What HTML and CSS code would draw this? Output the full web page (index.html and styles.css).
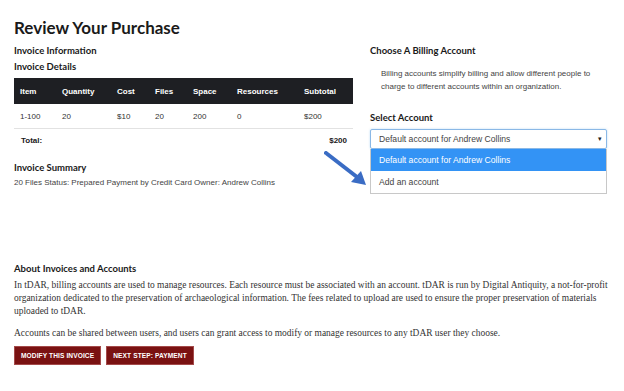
FILE: index.html
```html
<!DOCTYPE html>
<html lang="en">
<head>
    <meta charset="UTF-8">
    <title>Review Your Purchase</title>
    <link rel="stylesheet" href="styles.css">
</head>
<body>
    <div class="page">
        <h1>Review Your Purchase</h1>

        <div class="columns">
            <div class="invoice">
                <h3>Invoice Information</h3>
                <h3 class="details-title">Invoice Details</h3>
                <table class="invoice-table">
                    <thead>
                        <tr>
                            <th class="c-item">Item</th>
                            <th class="c-qty">Quantity</th>
                            <th class="c-cost">Cost</th>
                            <th class="c-files">Files</th>
                            <th class="c-space">Space</th>
                            <th class="c-res">Resources</th>
                            <th class="c-sub">Subtotal</th>
                        </tr>
                    </thead>
                    <tbody>
                        <tr class="line">
                            <td>1-100</td>
                            <td>20</td>
                            <td>$10</td>
                            <td>20</td>
                            <td>200</td>
                            <td>0</td>
                            <td>$200</td>
                        </tr>
                        <tr class="total">
                            <td colspan="6">Total:</td>
                            <td class="amount">$200</td>
                        </tr>
                    </tbody>
                </table>

                <h3 class="summary-title">Invoice Summary</h3>
                <p class="summary">20 Files Status: Prepared Payment by Credit Card Owner: Andrew Collins</p>
            </div>

            <div class="billing">
                <h3>Choose A Billing Account</h3>
                <p class="help">Billing accounts simplify billing and allow different people to charge to different accounts within an organization.</p>
                <h3 class="select-label">Select Account</h3>
                <div class="select-wrap">
                    <div class="select">
                        <span>Default account for Andrew Collins</span>
                        <span class="caret">&#9662;</span>
                    </div>
                    <ul class="options">
                        <li class="active">Default account for Andrew Collins</li>
                        <li>Add an account</li>
                    </ul>
                </div>
            </div>

            <svg class="pointer" width="44" height="36" viewBox="0 0 44 36">
                <line x1="2" y1="2" x2="33" y2="26" stroke="#3a6cc4" stroke-width="4" stroke-linecap="round"/>
                <polygon points="42,34 27,31 37,20" fill="#3a6cc4"/>
            </svg>
        </div>

        <div class="about">
            <h3>About Invoices and Accounts</h3>
            <p>In tDAR, billing accounts are used to manage resources. Each resource must be associated with an account. tDAR is run by Digital Antiquity, a not-for-profit organization dedicated to the preservation of archaeological information. The fees related to upload are used to ensure the proper preservation of materials uploaded to tDAR.</p>
            <p>Accounts can be shared between users, and users can grant access to modify or manage resources to any tDAR user they choose.</p>
            <div class="actions">
                <button>Modify this invoice</button>
                <button>Next Step: Payment</button>
            </div>
        </div>
    </div>
</body>
</html>
```

FILE: styles.css
```css
body {
    margin: 0;
    background: #ffffff;
    color: #222222;
    font-family: "Liberation Sans", Arial, sans-serif;
}

.page {
    padding: 16px 10px 0 14px;
}

h1 {
    margin: 0;
    font-family: Lato, "Noto Sans", sans-serif;
    font-weight: 700;
    font-size: 17px;
    line-height: 24px;
    color: #1a1a1a;
}

h3 {
    margin: 0;
    font-family: Lato, "Noto Sans", sans-serif;
    font-weight: 700;
    font-size: 9.5px;
    line-height: 14px;
    color: #1a1a1a;
}

.columns {
    display: flex;
    position: relative;
    margin-top: 4px;
}

/* left column */

.invoice {
    width: 339px;
}

.details-title {
    margin-top: 2px;
}

.invoice-table {
    width: 100%;
    margin-top: 4px;
    border-collapse: collapse;
    font-size: 8px;
}

.invoice-table th {
    background: #1e1f23;
    color: #ffffff;
    font-weight: 700;
    text-align: left;
    height: 26px;
    padding: 0 0 0 6px;
}

.invoice-table td {
    padding: 0 0 0 6px;
    height: 24px;
    color: #333333;
}

.c-item { width: 36px; }
.c-qty { width: 49px; }
.c-cost { width: 32px; }
.c-files { width: 32px; }
.c-space { width: 38px; }
.c-res { width: 61px; }

.invoice-table .line td {
    border-bottom: 1px solid #e2e2e2;
}

.invoice-table .total td {
    font-weight: 700;
    color: #1a1a1a;
    height: 23px;
    padding-left: 7px;
}

.invoice-table .total .amount {
    text-align: right;
    padding-right: 6px;
}

.summary-title {
    margin-top: 9px;
}

.summary {
    margin: 3px 0 0;
    font-size: 8px;
    color: #444444;
}

/* right column */

.billing {
    width: 237px;
    margin-left: 17px;
}

.help {
    margin: 9px 0 0 11px;
    font-size: 8px;
    line-height: 13px;
    color: #444444;
}

.select-label {
    margin-top: 18px;
}

.select-wrap {
    position: relative;
    margin-top: 4px;
}

.select {
    display: flex;
    justify-content: space-between;
    align-items: center;
    height: 18px;
    padding: 0 4px 0 8px;
    border: 1px solid #8ab8e6;
    border-radius: 2px;
    box-shadow: 0 0 2px rgba(102, 175, 233, 0.5);
    font-size: 8.6px;
    color: #444444;
}

.caret {
    font-size: 7px;
    color: #222222;
}

.options {
    position: absolute;
    top: 20px;
    left: 0;
    right: 0;
    margin: 0;
    padding: 0;
    list-style: none;
    border: 1px solid #c8c8c8;
    border-top: none;
    background: #ffffff;
    font-size: 8.6px;
    color: #444444;
}

.options li {
    height: 22px;
    line-height: 22px;
    padding-left: 8px;
}

.options .active {
    background: #3393f5;
    color: #ffffff;
}

.pointer {
    position: absolute;
    left: 310px;
    top: 107px;
}

/* about */

.about {
    margin-top: 75px;
}

.about p {
    margin: 3px 0 0;
    font-family: "Liberation Serif", "Times New Roman", serif;
    font-size: 9.45px;
    line-height: 13px;
    color: #333333;
}

.about p + p {
    margin-top: 9px;
}

.actions {
    display: flex;
    gap: 5px;
    margin-top: 6px;
}

.actions button {
    height: 19px;
    padding: 0 6px;
    background: #7a1212;
    border: 1px solid #a44a4a;
    color: #ffffff;
    font-family: "Liberation Sans", Arial, sans-serif;
    font-weight: 700;
    font-size: 6.6px;
    text-transform: uppercase;
    letter-spacing: 0.1px;
}
```
